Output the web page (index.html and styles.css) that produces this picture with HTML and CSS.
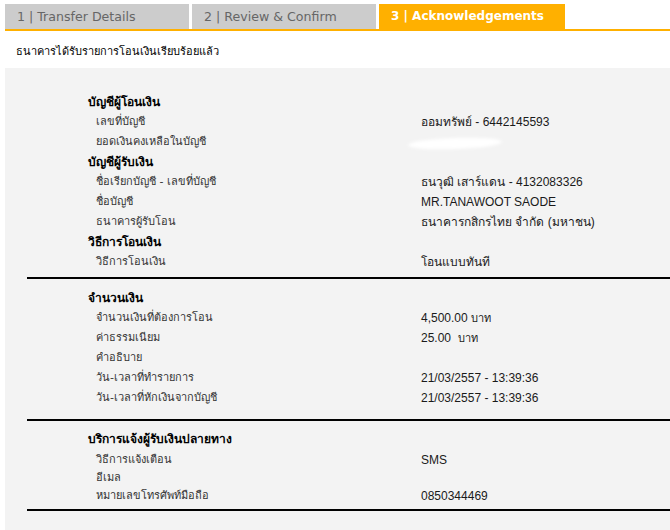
FILE: index.html
```html
<!DOCTYPE html>
<html lang="th">
<head>
<meta charset="UTF-8">
<title>Acknowledgements</title>
<link rel="stylesheet" href="styles.css">
</head>
<body>
<div class="tabs">
  <div class="tab">1 | Transfer Details</div>
  <div class="tab">2 | Review &amp; Confirm</div>
  <div class="tab active">3 | Acknowledgements</div>
</div>
<p class="notice">ธนาคารได้รับรายการโอนเงินเรียบร้อยแล้ว</p>

<div class="panel">
  <div class="section first">
    <div class="head">บัญชีผู้โอนเงิน</div>
    <div class="row"><span class="label">เลขที่บัญชี</span><span class="value">ออมทรัพย์ - 6442145593</span></div>
    <div class="row"><span class="label">ยอดเงินคงเหลือในบัญชี</span><span class="value"><span class="smudge"></span></span></div>
    <div class="head">บัญชีผู้รับเงิน</div>
    <div class="row"><span class="label">ชื่อเรียกบัญชี - เลขที่บัญชี</span><span class="value">ธนวุฒิ เสาร์แดน - 4132083326</span></div>
    <div class="row"><span class="label">ชื่อบัญชี</span><span class="value">MR.TANAWOOT SAODE</span></div>
    <div class="row"><span class="label">ธนาคารผู้รับโอน</span><span class="value">ธนาคารกสิกรไทย จำกัด (มหาชน)</span></div>
    <div class="head">วิธีการโอนเงิน</div>
    <div class="row"><span class="label">วิธีการโอนเงิน</span><span class="value">โอนแบบทันที</span></div>
  </div>
  <hr class="rule rule-1">

  <div class="section">
    <div class="head">จำนวนเงิน</div>
    <div class="row"><span class="label">จำนวนเงินที่ต้องการโอน</span><span class="value">4,500.00 <small>บาท</small></span></div>
    <div class="row"><span class="label">ค่าธรรมเนียม</span><span class="value">25.00&nbsp; <small>บาท</small></span></div>
    <div class="row"><span class="label">คำอธิบาย</span><span class="value"></span></div>
    <div class="row"><span class="label">วัน-เวลาที่ทำรายการ</span><span class="value">21/03/2557 - 13:39:36</span></div>
    <div class="row"><span class="label">วัน-เวลาที่หักเงินจากบัญชี</span><span class="value">21/03/2557 - 13:39:36</span></div>
  </div>
  <hr class="rule rule-2">

  <div class="section compact">
    <div class="head">บริการแจ้งผู้รับเงินปลายทาง</div>
    <div class="row"><span class="label">วิธีการแจ้งเตือน</span><span class="value">SMS</span></div>
    <div class="row"><span class="label">อีเมล</span><span class="value"></span></div>
    <div class="row"><span class="label">หมายเลขโทรศัพท์มือถือ</span><span class="value">0850344469</span></div>
  </div>
  <hr class="rule rule-3">
</div>
</body>
</html>
```

FILE: styles.css
```css
body {
  margin: 0;
  font-family: Tahoma, "DejaVu Sans", sans-serif;
  font-size: 12px;
  color: #000;
  background: #fff;
  overflow: hidden;
}
.tabs {
  display: flex;
  margin: 4px 0 0 5px;
  border-bottom: 2px solid #ffb000;
}
.tab {
  width: 184px;
  height: 25px;
  line-height: 25px;
  margin-right: 3px;
  padding-left: 12px;
  box-sizing: border-box;
  background-color: #cccccc;
  color: #666;
  font-size: 12.6px;
  white-space: nowrap;
}
.tab.active {
  width: 186px;
  background-color: #ffb000;
  color: #fff;
  font-weight: bold;
  font-size: 12px;
}
.notice {
  margin: 0;
  padding: 11px 0 0 16px;
  height: 26px;
  font-size: 11px;
}
.panel {
  margin-left: 5px;
  padding-top: 24px;
  height: 460px;
  background-color: #f3f3f3;
}
.section {
  padding-left: 83px;
}
.head {
  height: 20px;
  line-height: 20px;
  font-weight: bold;
  font-size: 12px;
}
.row {
  display: flex;
  height: 20px;
  line-height: 20px;
}
.compact .head {
  margin-bottom: 2px;
}
.compact .row {
  height: 18px;
  line-height: 18px;
}
.label {
  width: 325px;
  padding-left: 8px;
  color: #333;
  font-size: 11px;
}
.value {
  color: #1a1a1a;
  font-family: "Liberation Sans", Tahoma, sans-serif;
  font-size: 12px;
}
.value small {
  font-size: 11px;
}
.smudge {
  display: block;
  width: 94px;
  height: 11px;
  margin: 6px 0 0 -13px;
  background: #fff;
  border-radius: 50%;
  filter: blur(1.5px);
  transform: rotate(-2deg);
}
.rule {
  margin: 0 0 0 22px;
  border: none;
  border-top: 2px solid #000;
}
.rule-1 {
  margin-top: 5px;
  margin-bottom: 9px;
}
.rule-2 {
  margin-top: 11px;
  margin-bottom: 8px;
}
.rule-3 {
  margin-top: 4px;
}
```
